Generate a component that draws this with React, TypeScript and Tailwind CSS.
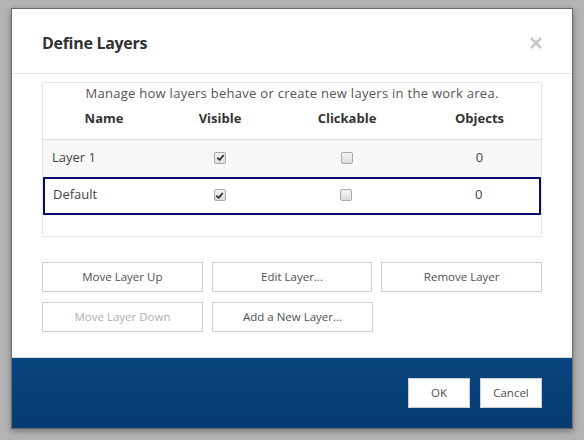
import React from 'react';

type Layer = { name: string; visible: boolean; clickable: boolean; objects: number; selected?: boolean };

const layers: Layer[] = [
  { name: 'Layer 1', visible: true, clickable: false, objects: 0 },
  { name: 'Default', visible: true, clickable: false, objects: 0, selected: true },
];

function Check({ checked }: { checked: boolean }) {
  return (
    <span className="inline-flex h-[12px] w-[12px] items-center justify-center rounded-[2px] border border-[#a9a9a9] bg-gradient-to-b from-[#f4f4f4] to-[#dcdcdc]">
      {checked && (
        <svg width="9" height="9" viewBox="0 0 10 10">
          <path d="M1.5 5.2 L4 7.6 L8.6 2.2" fill="none" stroke="#333" strokeWidth="2" strokeLinejoin="round" />
        </svg>
      )}
    </span>
  );
}

function Btn({ label, disabled }: { label: string; disabled?: boolean }) {
  return (
    <button
      className={
        'h-[30px] w-[161px] border border-[#cfcfcf] bg-white text-[11.5px] ' +
        (disabled ? 'text-[#b0b0b0]' : 'text-[#505050]')
      }
    >
      {label}
    </button>
  );
}

export default function App() {
  return (
    <div className="h-[440px] w-[584px] bg-[#b3b3b3] pl-[11px] pt-[8px]" style={{ fontFamily: '"Open Sans", "Noto Sans", sans-serif' }}>
      <div className="flex h-[421px] w-[562px] flex-col border border-[#6a6a6a] bg-white shadow-[0_2px_6px_rgba(0,0,0,0.35)]">
        <div className="flex h-[65px] items-center justify-between border-b border-[#e5e5e5] pl-[30px] pr-[29px] pt-[4px]">
          <h1 className="text-[16px] font-bold tracking-[-0.3px] text-[#333]">Define Layers</h1>
          <svg width="14" height="14" viewBox="0 0 14 14">
            <path d="M2 2 L12 12 M12 2 L2 12" stroke="#c8c8c8" strokeWidth="2.6" />
          </svg>
        </div>

        <div className="flex-1 px-[30px] pt-[8px]">
          <div className="h-[155px] border border-[#e6e6e6]">
            <p className="text-center text-[13px] leading-[20px] tracking-[0.28px] text-[#555]">
              Manage how layers behave or create new layers in the work area.
            </p>
            <div className="flex h-[37px] items-center border-b border-[#e2e2e2] pb-[4px] text-[13px] font-bold text-[#333]">
              <div className="w-[122px] text-center">Name</div>
              <div className="w-[110px] text-center">Visible</div>
              <div className="w-[144px] text-center">Clickable</div>
              <div className="w-[121px] text-center">Objects</div>
            </div>
            {layers.map((l) => (
              <div
                key={l.name}
                className={
                  'flex items-center pb-[2px] text-[13px] text-[#444] ' +
                  (l.selected ? 'h-[38px] border-2 border-[#0a0a6e] bg-white' : 'h-[37px] bg-[#f8f8f8]')
                }
              >
                <div className={l.selected ? 'w-[120px] pl-[8px]' : 'w-[122px] pl-[9px]'}>{l.name}</div>
                <div className="flex w-[110px] justify-center"><Check checked={l.visible} /></div>
                <div className="flex w-[144px] justify-center"><Check checked={l.clickable} /></div>
                <div className="w-[121px] text-center">{l.objects}</div>
              </div>
            ))}
          </div>

          <div className="mt-[25px] flex gap-[9px]">
            <Btn label="Move Layer Up" />
            <Btn label="Edit Layer..." />
            <Btn label="Remove Layer" />
          </div>
          <div className="mt-[10px] flex gap-[9px]">
            <Btn label="Move Layer Down" disabled />
            <Btn label="Add a New Layer..." />
          </div>
        </div>

        <div className="flex h-[71px] items-center justify-end gap-[10px] border-t border-[#d6d6d6] bg-gradient-to-b from-[#08457f] to-[#053b71] pr-[30px]">
          <button className="h-[30px] w-[62px] border border-[#cfcfcf] bg-white text-[11.5px] text-[#505050]">OK</button>
          <button className="h-[30px] w-[62px] border border-[#cfcfcf] bg-white text-[11.5px] text-[#505050]">Cancel</button>
        </div>
      </div>
    </div>
  );
}
